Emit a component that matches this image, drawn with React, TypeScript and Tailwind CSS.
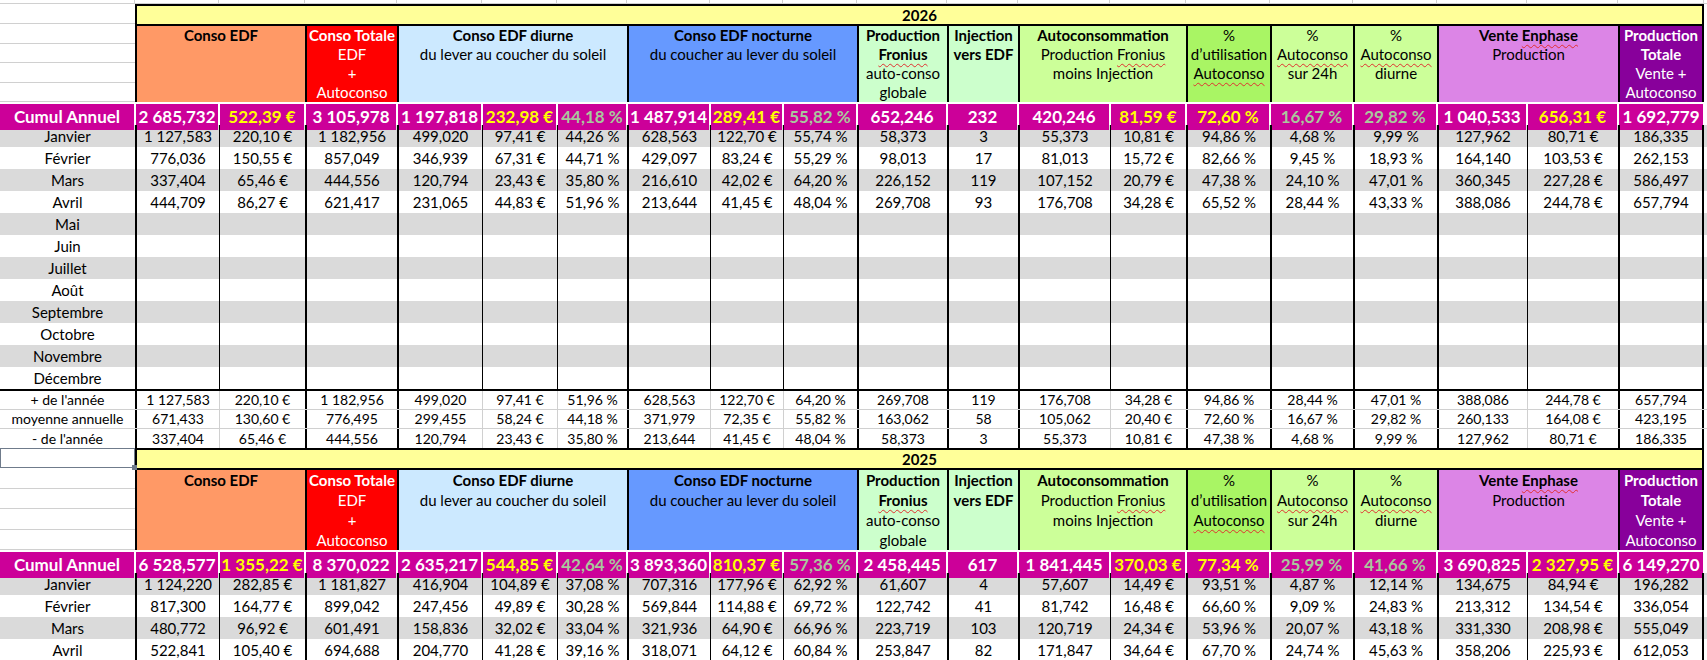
import React from "react";

const GRID =
  "grid grid-cols-[135px_84px_86px_92px_85px_75px_70px_83px_73px_74px_90px_71px_92px_76px_84px_83px_84px_90px_91px_86px]";

// left edge of columns B..T : true = thick group border
const EDGE = [true, false, true, true, false, false, true, false, false, true, true, true, false, true, true, true, true, false, true];

// colour of the cumul figures: w white, y yellow, g grey-green
const TONE = ["w", "y", "w", "w", "y", "g", "w", "y", "g", "w", "w", "w", "y", "y", "g", "g", "w", "y", "w"];

const toneClass: Record<string, string> = {
  w: "text-white",
  y: "text-[#ffff00]",
  g: "text-[#a9c79d]",
};

const Wavy = ({ children }: { children: React.ReactNode }) => (
  <span className="underline decoration-wavy decoration-[#e03030] decoration-1 underline-offset-[3px]">{children}</span>
);

type Header = { span: string; bg: string; lines: React.ReactNode[] };

const HEADERS: Header[] = [
  { span: "col-span-2", bg: "bg-[#ff9966]", lines: [<b>Conso EDF</b>] },
  {
    span: "col-span-1",
    bg: "bg-[#ff0000] text-white",
    lines: [<b>Conso Totale</b>, "EDF", "+", <Wavy>Autoconso</Wavy>],
  },
  { span: "col-span-3", bg: "bg-[#cce9ff]", lines: [<b>Conso EDF diurne</b>, "du lever au coucher du soleil"] },
  { span: "col-span-3", bg: "bg-[#6699ff]", lines: [<b>Conso EDF nocturne</b>, "du coucher au lever du soleil"] },
  {
    span: "col-span-1",
    bg: "bg-[#ccffcc]",
    lines: [<b>Production</b>, <b><Wavy>Fronius</Wavy></b>, "auto-conso", "globale"],
  },
  { span: "col-span-1", bg: "bg-[#ccffcc]", lines: [<b>Injection</b>, <b>vers EDF</b>] },
  {
    span: "col-span-2",
    bg: "bg-[#ccff99]",
    lines: [<b>Autoconsommation</b>, <>Production <Wavy>Fronius</Wavy></>, "moins Injection"],
  },
  { span: "col-span-1", bg: "bg-[#a9f564]", lines: ["%", "d’utilisation", <Wavy>Autoconso</Wavy>] },
  { span: "col-span-1", bg: "bg-[#ccff99]", lines: ["%", <Wavy>Autoconso</Wavy>, "sur 24h"] },
  { span: "col-span-1", bg: "bg-[#ccff99]", lines: ["%", <Wavy>Autoconso</Wavy>, "diurne"] },
  { span: "col-span-2", bg: "bg-[#dc85e6]", lines: [<b>Vente <Wavy>Enphase</Wavy></b>, "Production"] },
  {
    span: "col-span-1",
    bg: "bg-[#88009b] text-white",
    lines: [<b>Production</b>, <b>Totale</b>, "Vente +", <Wavy>Autoconso</Wavy>],
  },
];

type Year = {
  year: string;
  cumul: string[];
  months: (string[] | null)[];
  stats?: string[][];
};

const MONTHS = ["Janvier", "Février", "Mars", "Avril", "Mai", "Juin", "Juillet", "Août", "Septembre", "Octobre", "Novembre", "Décembre"];

const Y2026: Year = {
  year: "2026",
  cumul: ["2 685,732", "522,39 €", "3 105,978", "1 197,818", "232,98 €", "44,18 %", "1 487,914", "289,41 €", "55,82 %", "652,246", "232", "420,246", "81,59 €", "72,60 %", "16,67 %", "29,82 %", "1 040,533", "656,31 €", "1 692,779"],
  months: [
    ["1 127,583", "220,10 €", "1 182,956", "499,020", "97,41 €", "44,26 %", "628,563", "122,70 €", "55,74 %", "58,373", "3", "55,373", "10,81 €", "94,86 %", "4,68 %", "9,99 %", "127,962", "80,71 €", "186,335"],
    ["776,036", "150,55 €", "857,049", "346,939", "67,31 €", "44,71 %", "429,097", "83,24 €", "55,29 %", "98,013", "17", "81,013", "15,72 €", "82,66 %", "9,45 %", "18,93 %", "164,140", "103,53 €", "262,153"],
    ["337,404", "65,46 €", "444,556", "120,794", "23,43 €", "35,80 %", "216,610", "42,02 €", "64,20 %", "226,152", "119", "107,152", "20,79 €", "47,38 %", "24,10 %", "47,01 %", "360,345", "227,28 €", "586,497"],
    ["444,709", "86,27 €", "621,417", "231,065", "44,83 €", "51,96 %", "213,644", "41,45 €", "48,04 %", "269,708", "93", "176,708", "34,28 €", "65,52 %", "28,44 %", "43,33 %", "388,086", "244,78 €", "657,794"],
    null, null, null, null, null, null, null, null,
  ],
  stats: [
    ["+ de l'année", "1 127,583", "220,10 €", "1 182,956", "499,020", "97,41 €", "51,96 %", "628,563", "122,70 €", "64,20 %", "269,708", "119", "176,708", "34,28 €", "94,86 %", "28,44 %", "47,01 %", "388,086", "244,78 €", "657,794"],
    ["moyenne annuelle", "671,433", "130,60 €", "776,495", "299,455", "58,24 €", "44,18 %", "371,979", "72,35 €", "55,82 %", "163,062", "58", "105,062", "20,40 €", "72,60 %", "16,67 %", "29,82 %", "260,133", "164,08 €", "423,195"],
    ["- de l'année", "337,404", "65,46 €", "444,556", "120,794", "23,43 €", "35,80 %", "213,644", "41,45 €", "48,04 %", "58,373", "3", "55,373", "10,81 €", "47,38 %", "4,68 %", "9,99 %", "127,962", "80,71 €", "186,335"],
  ],
};

const Y2025: Year = {
  year: "2025",
  cumul: ["6 528,577", "1 355,22 €", "8 370,022", "2 635,217", "544,85 €", "42,64 %", "3 893,360", "810,37 €", "57,36 %", "2 458,445", "617", "1 841,445", "370,03 €", "77,34 %", "25,99 %", "41,66 %", "3 690,825", "2 327,95 €", "6 149,270"],
  months: [
    ["1 124,220", "282,85 €", "1 181,827", "416,904", "104,89 €", "37,08 %", "707,316", "177,96 €", "62,92 %", "61,607", "4", "57,607", "14,49 €", "93,51 %", "4,87 %", "12,14 %", "134,675", "84,94 €", "196,282"],
    ["817,300", "164,77 €", "899,042", "247,456", "49,89 €", "30,28 %", "569,844", "114,88 €", "69,72 %", "122,742", "41", "81,742", "16,48 €", "66,60 %", "9,09 %", "24,83 %", "213,312", "134,54 €", "336,054"],
    ["480,772", "96,92 €", "601,491", "158,836", "32,02 €", "33,04 %", "321,936", "64,90 €", "66,96 %", "223,719", "103", "120,719", "24,34 €", "53,96 %", "20,07 %", "43,18 %", "331,330", "208,98 €", "555,049"],
    ["522,841", "105,40 €", "694,688", "204,770", "41,28 €", "39,16 %", "318,071", "64,12 €", "60,84 %", "253,847", "82", "171,847", "34,64 €", "67,70 %", "24,74 %", "45,63 %", "358,206", "225,93 €", "612,053"],
  ],
};

const YearRow = ({ year, cursor }: { year: string; cursor?: boolean }) => (
  <div className={`${GRID} h-[20px]`}>
    {cursor ? (
      <div className="relative border border-[#6f7b8b]">
        <span className="absolute -bottom-[3px] -right-[3px] h-[5px] w-[5px] bg-[#6f7b8b]" />
      </div>
    ) : (
      <div className="border-b border-[#d0d0d0]" />
    )}
    <div className="col-[2/-1] flex items-center justify-center border-x-2 border-t-2 border-black bg-[#ffff99] text-[15px] font-bold leading-none">
      {year}
    </div>
  </div>
);

const HeaderRow = ({ tall }: { tall?: boolean }) => (
  <div className={`${GRID} ${tall ? "h-[82px]" : "h-[78px]"}`}>
    <div className="flex flex-col">
      {[0, 1, 2, 3].map((i) => (
        <div key={i} className="flex-1 border-b border-[#d0d0d0]" />
      ))}
    </div>
    {HEADERS.map((h, i) => (
      <div
        key={i}
        className={`${h.span} ${h.bg} flex flex-col items-center overflow-hidden border-l-2 border-t-2 border-black text-[15px] ${
          tall ? "leading-[20px]" : "leading-[19px]"
        } ${i === HEADERS.length - 1 ? "border-r-2" : ""}`}
      >
        {h.lines.map((l, j) => (
          <div key={j} className="whitespace-nowrap">
            {l}
          </div>
        ))}
      </div>
    ))}
  </div>
);

const CumulRow = ({ values }: { values: string[] }) => (
  <div className={`${GRID} h-[23px] bg-white pb-px pt-[2px]`}>
    <div className="mr-px flex items-center justify-center bg-[#cc0099] text-[17px] font-bold text-white">Cumul Annuel</div>
    {values.map((v, i) => (
      <div
        key={i}
        className={`mx-px flex items-center justify-center whitespace-nowrap bg-[#cc0099] text-[17px] font-bold ${toneClass[TONE[i]]}`}
      >
        {v}
      </div>
    ))}
  </div>
);

const MonthRow = ({ label, values, shade }: { label: string; values: string[] | null; shade: boolean }) => (
  <div className={`${GRID} h-[22px] text-[15px] ${shade ? "bg-[#dadada]" : "bg-white"}`}>
    <div className="flex items-center justify-center">{label}</div>
    {EDGE.map((edge, i) => (
      <div
        key={i}
        className={`flex items-center justify-center whitespace-nowrap border-black ${edge ? "border-l-2" : "border-l"} ${
          i === 18 ? "border-r-2" : ""
        }`}
      >
        {values ? values[i] : ""}
      </div>
    ))}
  </div>
);

const StatRow = ({ cells, last }: { cells: string[]; last: boolean }) => (
  <div className={`${GRID} h-[19px] text-[14px] leading-none ${last ? "" : "border-b border-[#d0d0d0]"}`}>
    <div className="flex items-center justify-center whitespace-nowrap">{cells[0]}</div>
    {EDGE.map((edge, i) => (
      <div
        key={i}
        className={`flex items-center justify-center whitespace-nowrap ${
          edge ? "border-l-2 border-l-black" : "border-l border-l-[#d0d0d0]"
        } ${i === 18 ? "border-r-2 border-r-black" : ""}`}
      >
        {cells[i + 1]}
      </div>
    ))}
  </div>
);

const TopStrip = () => (
  <div className={`${GRID} h-[4px] border-b border-[#d0d0d0]`}>
    {Array.from({ length: 20 }).map((_, i) => (
      <div key={i} className="border-r border-[#d0d0d0]" />
    ))}
  </div>
);

export default function App() {
  return (
    <div className="h-[660px] w-[1707px] overflow-hidden bg-white font-['Lato',sans-serif] text-black">
      <TopStrip />

      {/* 2026 */}
      <YearRow year={Y2026.year} />
      <HeaderRow />
      <CumulRow values={Y2026.cumul} />
      {MONTHS.map((m, i) => (
        <MonthRow key={m} label={m} values={Y2026.months[i]} shade={i % 2 === 0} />
      ))}
      <div className="h-[2px] w-[1704px] bg-black" />
      {Y2026.stats!.map((s, i) => (
        <StatRow key={i} cells={s} last={i === 2} />
      ))}

      {/* 2025 */}
      <YearRow year={Y2025.year} cursor />
      <HeaderRow tall />
      <CumulRow values={Y2025.cumul} />
      {MONTHS.slice(0, 4).map((m, i) => (
        <MonthRow key={m} label={m} values={Y2025.months[i]} shade={i % 2 === 0} />
      ))}
    </div>
  );
}
